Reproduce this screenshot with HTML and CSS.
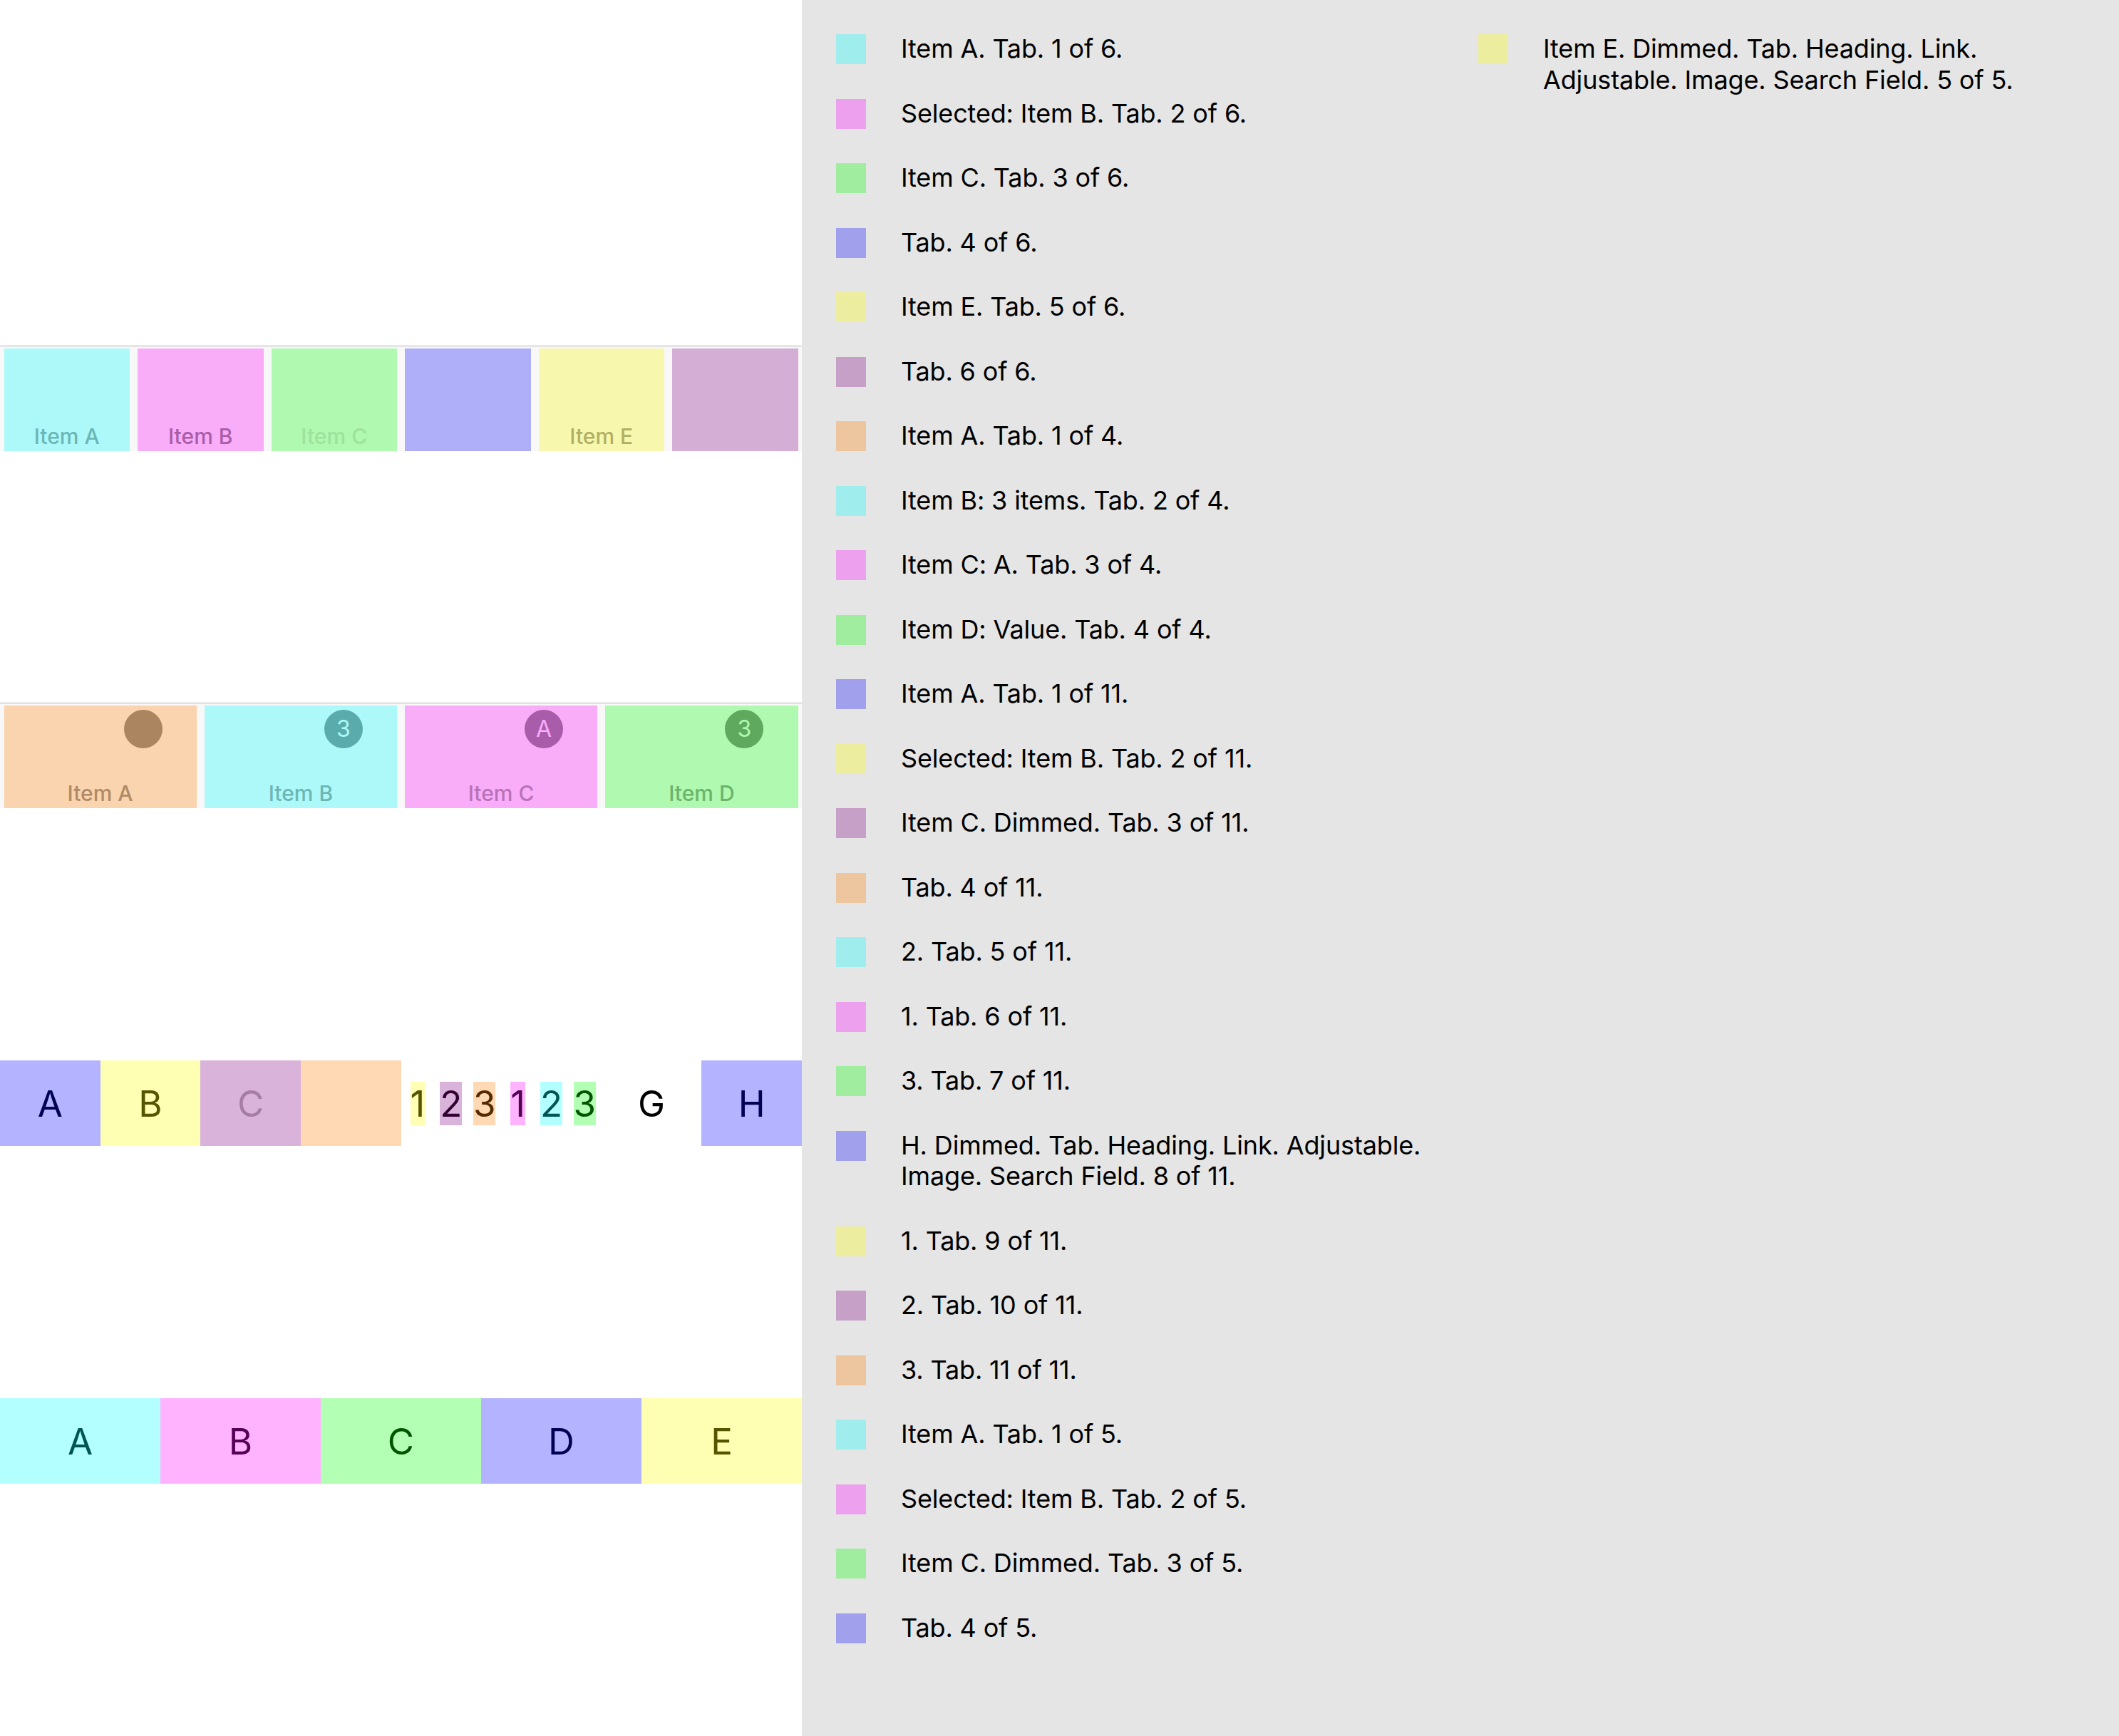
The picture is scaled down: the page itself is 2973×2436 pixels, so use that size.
FILE: index.html
```html
<!DOCTYPE html>
<html lang="en">
<head>
<meta charset="utf-8">
<title>Tab bar accessibility</title>
<link rel="stylesheet" href="styles.css">
</head>
<body>
<main class="stage">
  <div class="tabbar tabbar-six">
    <div class="tab"><div class="face c-cyan"><span class="label l-cyan">Item A</span></div></div>
    <div class="tab"><div class="face c-pink"><span class="label l-pink-sel">Item B</span></div></div>
    <div class="tab"><div class="face c-green"><span class="label l-green-dim">Item C</span></div></div>
    <div class="tab"><div class="face c-blue"></div></div>
    <div class="tab"><div class="face c-yellow"><span class="label l-yellow">Item E</span></div></div>
    <div class="tab"><div class="face c-purple"></div></div>
  </div>

  <div class="tabbar tabbar-four">
    <div class="tab"><div class="face c-orange"><span class="badge b-brown"></span><span class="label l-orange">Item A</span></div></div>
    <div class="tab"><div class="face c-cyan"><span class="badge b-teal">3</span><span class="label l-cyan">Item B</span></div></div>
    <div class="tab"><div class="face c-pink"><span class="badge b-purple">A</span><span class="label l-pink">Item C</span></div></div>
    <div class="tab"><div class="face c-green"><span class="badge b-green">3</span><span class="label l-green">Item D</span></div></div>
  </div>

  <div class="strip strip-eight">
    <div class="cell s-blue t-navy">A</div>
    <div class="cell s-yellow t-olive">B</div>
    <div class="cell s-purple t-dim">C</div>
    <div class="cell s-orange"></div>
    <div class="cell group">
      <div class="sub"><span class="pill s-yellow t-olive">1</span></div>
      <div class="sub"><span class="pill s-purple t-plum">2</span></div>
      <div class="sub"><span class="pill s-orange t-brown">3</span></div>
    </div>
    <div class="cell group">
      <div class="sub"><span class="pill s-pink t-magenta">1</span></div>
      <div class="sub"><span class="pill s-cyan t-teal">2</span></div>
      <div class="sub"><span class="pill s-green t-forest">3</span></div>
    </div>
    <div class="cell t-black">G</div>
    <div class="cell s-blue t-navy">H</div>
  </div>

  <div class="strip strip-five">
    <div class="cell s-cyan t-teal">A</div>
    <div class="cell s-pink t-magenta">B</div>
    <div class="cell s-green t-forest">C</div>
    <div class="cell s-blue t-navy">D</div>
    <div class="cell s-yellow t-olive">E</div>
  </div>
</main>

<aside class="log">
  <ul class="col">
    <li class="entry"><span class="sw w-cyan"></span><span class="txt">Item A. Tab. 1 of 6.</span></li>
    <li class="entry"><span class="sw w-pink"></span><span class="txt">Selected: Item B. Tab. 2 of 6.</span></li>
    <li class="entry"><span class="sw w-green"></span><span class="txt">Item C. Tab. 3 of 6.</span></li>
    <li class="entry"><span class="sw w-blue"></span><span class="txt">Tab. 4 of 6.</span></li>
    <li class="entry"><span class="sw w-yellow"></span><span class="txt">Item E. Tab. 5 of 6.</span></li>
    <li class="entry"><span class="sw w-purple"></span><span class="txt">Tab. 6 of 6.</span></li>
    <li class="entry"><span class="sw w-orange"></span><span class="txt">Item A. Tab. 1 of 4.</span></li>
    <li class="entry"><span class="sw w-cyan"></span><span class="txt">Item B: 3 items. Tab. 2 of 4.</span></li>
    <li class="entry"><span class="sw w-pink"></span><span class="txt">Item C: A. Tab. 3 of 4.</span></li>
    <li class="entry"><span class="sw w-green"></span><span class="txt">Item D: Value. Tab. 4 of 4.</span></li>
    <li class="entry"><span class="sw w-blue"></span><span class="txt">Item A. Tab. 1 of 11.</span></li>
    <li class="entry"><span class="sw w-yellow"></span><span class="txt">Selected: Item B. Tab. 2 of 11.</span></li>
    <li class="entry"><span class="sw w-purple"></span><span class="txt">Item C. Dimmed. Tab. 3 of 11.</span></li>
    <li class="entry"><span class="sw w-orange"></span><span class="txt">Tab. 4 of 11.</span></li>
    <li class="entry"><span class="sw w-cyan"></span><span class="txt">2. Tab. 5 of 11.</span></li>
    <li class="entry"><span class="sw w-pink"></span><span class="txt">1. Tab. 6 of 11.</span></li>
    <li class="entry"><span class="sw w-green"></span><span class="txt">3. Tab. 7 of 11.</span></li>
    <li class="entry"><span class="sw w-blue"></span><span class="txt">H. Dimmed. Tab. Heading. Link. Adjustable. Image. Search Field. 8 of 11.</span></li>
    <li class="entry"><span class="sw w-yellow"></span><span class="txt">1. Tab. 9 of 11.</span></li>
    <li class="entry"><span class="sw w-purple"></span><span class="txt">2. Tab. 10 of 11.</span></li>
    <li class="entry"><span class="sw w-orange"></span><span class="txt">3. Tab. 11 of 11.</span></li>
    <li class="entry"><span class="sw w-cyan"></span><span class="txt">Item A. Tab. 1 of 5.</span></li>
    <li class="entry"><span class="sw w-pink"></span><span class="txt">Selected: Item B. Tab. 2 of 5.</span></li>
    <li class="entry"><span class="sw w-green"></span><span class="txt">Item C. Dimmed. Tab. 3 of 5.</span></li>
    <li class="entry"><span class="sw w-blue"></span><span class="txt">Tab. 4 of 5.</span></li>
  </ul>
  <ul class="col">
    <li class="entry"><span class="sw w-yellow"></span><span class="txt">Item E. Dimmed. Tab. Heading. Link. Adjustable. Image. Search Field. 5 of 5.</span></li>
  </ul>
</aside>
</body>
</html>
```

FILE: styles.css
```css
* { box-sizing: border-box; }

html, body {
  margin: 0;
  padding: 0;
}

body {
  width: 2973px;
  height: 2436px;
  overflow: hidden;
  display: grid;
  grid-template-columns: 1125px 1fr;
  font-family: Inter, "Noto Sans", "Liberation Sans", sans-serif;
  color: #000;
}

/* ---------- left stage ---------- */
.stage {
  background: #ffffff;
  display: flex;
  flex-direction: column;
  padding-top: 485px;
}

.tabbar {
  display: flex;
  border-top: 1px solid #b2b2b2;
  background: #f8f8f8;
  padding-top: 3px;
}

.tabbar-four { margin-top: 353px; }

.tab {
  flex: 1 1 0;
  padding: 0 5.5px;
}

.face {
  position: relative;
  height: 144px;
  display: flex;
  align-items: flex-end;
  justify-content: center;
  padding-bottom: 3px;
}

.label {
  font-size: 30px;
  line-height: 35px;
  font-weight: 500;
}

.badge {
  position: absolute;
  top: 6px;
  left: calc(50% + 33px);
  width: 54px;
  height: 54px;
  border-radius: 50%;
  text-align: center;
  font-size: 32px;
  line-height: 54px;
}

.c-cyan { background: #adf9f9; }
.c-pink { background: #f9adf9; }
.c-green { background: #b0f9b0; }
.c-blue { background: #aeaef9; }
.c-yellow { background: #f7f8ae; }
.c-purple { background: #d4aed4; }
.c-orange { background: #f9d4ae; }

.l-cyan { color: #6cb6b6; }
.l-pink-sel { color: #a85ca8; }
.l-pink { color: #b872b8; }
.l-green-dim { color: #9ee29e; }
.l-green { color: #6cb46c; }
.l-yellow { color: #b0b064; }
.l-orange { color: #b08b66; }

.b-brown { background: #ab855f; color: #f9d4ae; }
.b-teal { background: #5aacac; color: #adf9f9; }
.b-purple { background: #a95ca9; color: #f9adf9; }
.b-green { background: #5ea95e; color: #b0f9b0; }

.strip {
  display: flex;
  height: 120px;
  margin-top: 354px;
}

.cell {
  flex: 1 1 0;
  display: flex;
  align-items: center;
  justify-content: center;
  font-size: 51px;
}

.group { align-items: stretch; }

.sub {
  flex: 1 1 0;
  display: flex;
  align-items: center;
  justify-content: center;
}

.pill {
  line-height: 61px;
}

.s-cyan { background: #b3ffff; }
.s-pink { background: #ffb3ff; }
.s-green { background: #b3ffb3; }
.s-blue { background: #b3b3ff; }
.s-yellow { background: #ffffb3; }
.s-purple { background: #d9b3d9; }
.s-orange { background: #ffd9b3; }

.t-navy { color: #000055; }
.t-olive { color: #555500; }
.t-dim { color: #a67da6; }
.t-black { color: #000000; }
.t-plum { color: #330033; }
.t-brown { color: #552a00; }
.t-magenta { color: #550055; }
.t-teal { color: #005555; }
.t-forest { color: #005500; }

/* ---------- right log ---------- */
.log {
  background: #e5e5e5;
  padding: 47px 48px 0 48px;
  display: grid;
  grid-template-columns: 853px 1fr;
  column-gap: 48px;
  align-items: start;
}

.col {
  list-style: none;
  margin: 0;
  padding: 0;
}

.entry {
  display: flex;
  align-items: flex-start;
  gap: 49px;
  margin-bottom: 47px;
  font-size: 36px;
  line-height: 43.5px;
  letter-spacing: -0.15px;
}

.sw {
  flex: none;
  width: 42px;
  height: 42px;
  margin-top: 1px;
}

.txt { flex: 1 1 auto; }

.w-cyan { background: #a0eded; }
.w-pink { background: #eda0ed; }
.w-green { background: #a0eda0; }
.w-blue { background: #a0a0ed; }
.w-yellow { background: #ededa0; }
.w-purple { background: #c6a0c6; }
.w-orange { background: #edc6a0; }
```
